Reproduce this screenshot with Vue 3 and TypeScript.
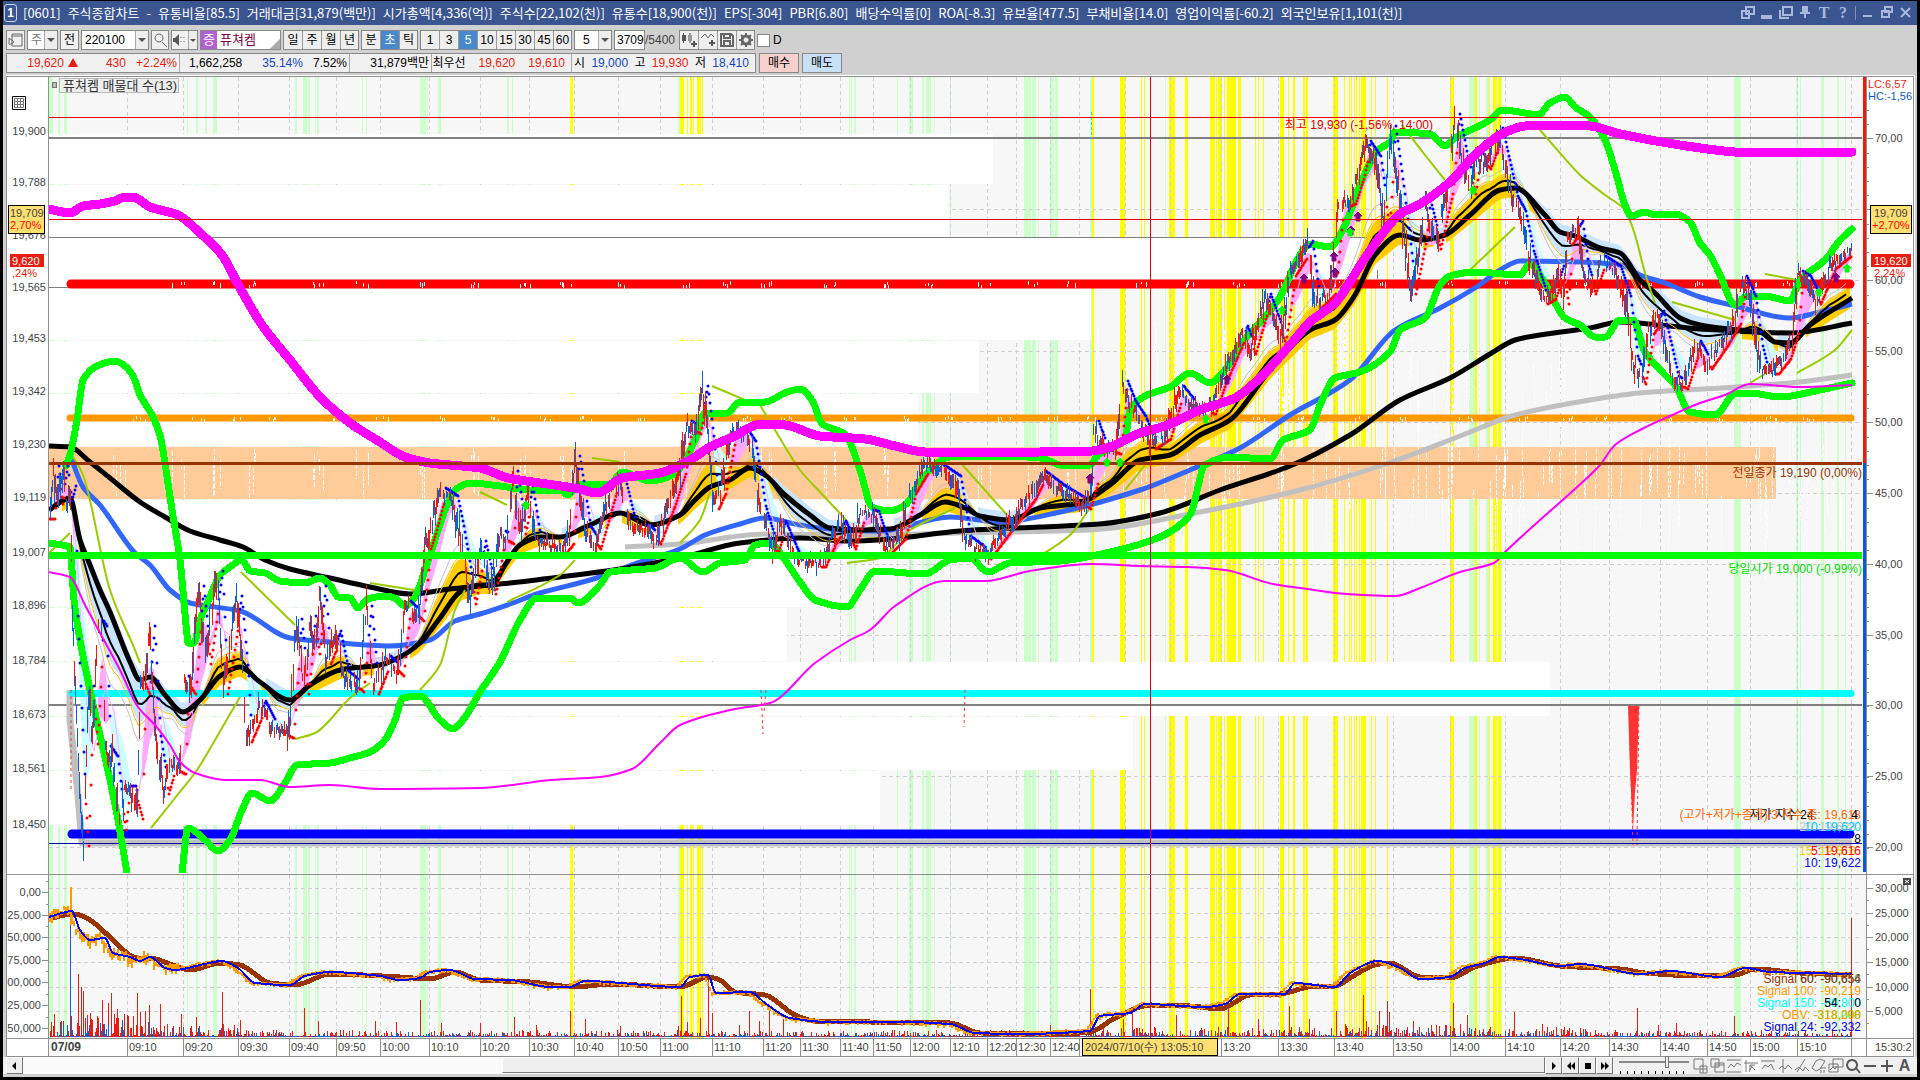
<script setup lang="ts">
import { ref } from 'vue'

type Pt = [number, number]

const titleWords = [
  '[0601]', '주식종합차트', '-', '유통비율[85.5]', '거래대금[31,879(백만)]', '시가총액[4,336(억)]',
  '주식수[22,102(천)]', '유통수[18,900(천)]', 'EPS[-304]', 'PBR[6.80]', '배당수익률[0]', 'ROA[-8.3]',
  '유보율[477.5]', '부채비율[14.0]', '영업이익률[-60.2]', '외국인보유[1,101(천)]',
]

const periods = ['일', '주', '월', '년']
const units = ['분', '초', '틱']
const steps = ['1', '3', '5', '10', '15', '30', '45', '60']
const unit = ref('초')
const step = ref('5')
const code = ref('220100')
const count = ref('3709')
const zoom = ref(70)

function parse(s: string): Pt[] {
  return s.trim().split(/\s+/).map((p) => p.split(',').map(Number) as Pt)
}
function line(points: Pt[]): string {
  return 'M' + points.map(([x, y]) => `${Math.round(x)} ${Math.round(y * 10) / 10}`).join('L')
}
// smooth curve through the points, with tangents limited so that peaks stay in place
function curve(points: Pt[]): string {
  const slope = (i: number): number => (points[i + 1][1] - points[i][1]) / (points[i + 1][0] - points[i][0])
  const tangent = (i: number): number => {
    if (i === 0) return slope(0)
    if (i === points.length - 1) return slope(i - 1)
    const a = slope(i - 1)
    const b = slope(i)
    return a * b <= 0 ? 0 : (2 * a * b) / (a + b)
  }
  let d = `M${points[0][0]} ${points[0][1]}`
  for (let i = 1; i < points.length; i++) {
    const [x0, y0] = points[i - 1]
    const [x1, y1] = points[i]
    const h = (x1 - x0) / 3
    d += `C${(x0 + h).toFixed(1)} ${(y0 + h * tangent(i - 1)).toFixed(1)} ${(x1 - h).toFixed(1)} ${(y1 - h * tangent(i)).toFixed(1)} ${x1} ${y1}`
  }
  return d
}
function path(s: string): string {
  return curve(parse(s))
}
function at(points: Pt[], x: number): number {
  if (x <= points[0][0]) return points[0][1]
  for (let i = 1; i < points.length; i++) {
    const a = points[i - 1]
    const b = points[i]
    if (x <= b[0]) return a[1] + ((b[1] - a[1]) * (x - a[0])) / (b[0] - a[0] || 1)
  }
  return points[points.length - 1][1]
}
let seed = 20240710
function rnd(): number {
  seed = (seed + 0x6d2b79f5) | 0
  let t = Math.imul(seed ^ (seed >>> 15), 1 | seed)
  t = (t + Math.imul(t ^ (t >>> 7), 61 | t)) ^ t
  return ((t ^ (t >>> 14)) >>> 0) / 4294967296
}

const LEFT = 49
const RIGHT = 1862

const ticks: [number, string][] = [
  [127, '09:10'], [183, '09:20'], [238, '09:30'], [289, '09:40'], [336, '09:50'], [380, '10:00'], [429, '10:10'],
  [480, '10:20'], [529, '10:30'], [574, '10:40'], [618, '10:50'], [660, '11:00'], [712, '11:10'], [763, '11:20'],
  [800, '11:30'], [840, '11:40'], [873, '11:50'], [910, '12:00'], [950, '12:10'], [987, '12:20'], [1016, '12:30'],
  [1050, '12:40'], [1079, ''], [1125, ''], [1170, ''], [1221, '13:20'], [1278, '13:30'], [1334, '13:40'],
  [1393, '13:50'], [1450, '14:00'], [1505, '14:10'], [1560, '14:20'], [1609, '14:30'], [1660, '14:40'],
  [1707, '14:50'], [1750, '15:00'], [1797, '15:10'], [1851, ''],
]
const axisTicks = ticks.filter(([x]) => x < 1080 || x > 1217)

const leftPrices: [number, string][] = [
  [131, '19,900'], [182, '19,788'], [235, '19,676'], [287, '19,565'], [338, '19,453'], [391, '19,342'], [444, '19,230'],
  [497, '19,119'], [552, '19,007'], [605, '18,896'], [660, '18,784'], [714, '18,673'], [768, '18,561'], [824, '18,450'],
]
const rightLevels: [number, string][] = [
  [138, '70,00'], [209, '65,00'], [280, '60,00'], [351, '55,00'], [422, '50,00'], [493, '45,00'],
  [564, '40,00'], [635, '35,00'], [705, '30,00'], [776, '25,00'], [847, '20,00'],
]
const minorTicks = Array.from({ length: 53 }, (_, i) => 110 + Math.round(i * 14.2))
const subLeft: [number, string][] = [
  [892, '0,00'], [915, '25,000'], [937, '50,000'], [960, '75,000'], [982, '00,000'], [1005, '25,000'], [1028, '50,000'],
]
const subRight: [number, string][] = [
  [888, '30,000'], [913, '25,000'], [937, '20,000'], [962, '15,000'], [987, '10,000'], [1011, '5,000'],
]

const greenBands = parse(`49,4 58,2 64,3 187,1 196,2 205,2 213,4 295,2 303,4 308,2 315,1 317,2 362,1 366,1 420,6 427,1 438,3 507,2 512,1
 678,2 849,1 851,1 854,2 897,1 909,4 922,2 926,5 934,1 950,1 1024,7 1032,4 1038,1 1050,4 1055,3 1090,2 1165,1
 1469,6 1479,1 1486,3 1501,1 1734,7 1796,2 1800,1 1821,3 1837,2 1845,1`)
const yellowBands = parse(`570,3 680,4 687,1 690,2 693,1 697,4 702,1 1092,2 1120,5 1141,1 1144,1 1169,6 1185,3 1210,5 1216,1 1218,4
 1224,1 1227,9 1238,3 1255,1 1258,1 1263,1 1280,4 1288,1 1293,2 1303,2 1306,2 1333,5 1344,1 1349,1 1351,1 1354,1 1356,1 1359,1
 1361,5 1371,1 1375,1 1387,1 1450,4 1475,2 1489,1 1493,4 1498,2 1500,1`)

// volume-by-price rows: top, bottom, right edge
const profile = [
  [134, 184, 993], [185, 237, 949], [238, 287, 1377], [288, 340, 1091], [341, 393, 979], [394, 446, 918],
  [500, 553, 1088], [554, 607, 816], [608, 661, 787], [662, 716, 1550], [717, 770, 1133], [771, 825, 880],
]

const magenta = path(`49,209 70,213 83,206 100,204 115,201 125,197 133,197 150,207 178,215 200,233 222,255 240,288 262,325 290,360 320,397
 350,423 380,442 405,457 430,463 480,468 508,478 540,483 580,489 597,493 622,478 660,473 690,460 710,447 735,436 760,424 785,425 820,436
 865,439 895,446 925,452 980,453 1040,452 1092,451 1110,447 1140,433 1165,426 1200,410 1235,398 1260,378 1290,345 1310,322 1335,303
 1365,258 1390,224 1400,214 1420,204 1450,182 1475,155 1500,135 1525,126 1560,125 1590,126 1620,134 1680,145 1735,152 1755,153 1800,152 1852,152`)
const upper = path(`66,466 70,455 77,420 83,380 97,366 115,361 125,366 133,376 140,395 152,415 160,435 166,470 172,510 180,560 187,635
 188,643 194,643 200,620 210,597 220,575 230,567 242,560 250,571 265,573 280,581 305,583 320,578 330,585 338,597 350,598 358,608
 368,599 385,596 395,598 405,606 415,597 425,570 435,540 445,510 455,490 470,483 500,486 530,490 560,490 568,495 580,484 610,484 622,472
 650,481 675,474 685,460 695,440 705,413 727,413 740,402 765,402 785,393 800,389 812,400 822,424 845,434 860,470 872,507 890,511 905,505
 925,475 950,457 1000,456 1040,458 1065,466 1090,465 1098,455 1125,440 1130,410 1145,396 1170,387 1190,373 1210,383 1225,370 1240,345
 1265,317 1280,297 1300,255 1310,244 1330,247 1345,225 1362,180 1378,150 1390,142 1395,132 1430,134 1445,146 1455,138 1490,120 1502,110
 1525,113 1538,115 1550,103 1565,97 1575,107 1590,117 1605,140 1615,170 1625,205 1631,216 1645,212 1655,215 1675,214 1690,222
 1700,243 1710,255 1720,275 1735,305 1745,297 1765,296 1790,301 1800,280 1825,260 1840,240 1852,229`)
const lowerA = path('49,543 70,547 74,600 80,640 90,690 100,735 110,780 118,820 127,873')
const lowerB = path(`182,873 188,828 205,840 218,851 230,840 242,810 252,793 270,801 285,783 297,765 330,763 350,758 370,752 385,740 395,720
 403,698 420,696 440,720 453,729 463,720 480,692 500,662 520,620 537,598 570,598 578,603 600,585 610,572 655,568 680,558 703,572 720,563
 745,560 755,545 770,543 785,560 800,582 815,600 847,607 860,590 875,571 925,574 950,560 970,558 988,572 1010,563 1060,561 1110,552
 1160,537 1190,515 1205,465 1230,457 1270,459 1283,440 1310,430 1320,405 1335,378 1360,372 1390,352 1400,330 1425,318 1440,285 1450,276
 1475,272 1520,275 1530,264 1543,280 1565,318 1580,325 1595,337 1605,337 1620,320 1633,320 1645,352 1665,375 1675,385 1690,412
 1715,415 1735,394 1750,393 1780,397 1820,390 1852,383`)
const slowBlack = path(`49,446 70,447 90,462 110,478 140,502 165,517 190,531 220,540 243,547 265,560 290,569 330,578 370,587 410,594
 450,589 480,586 510,583 560,577 620,569 680,558 740,543 800,538 850,541 890,539 960,531 1040,527 1100,524 1160,513 1220,490 1290,466
 1350,435 1400,400 1450,378 1490,354 1515,340 1540,335 1590,328 1620,322 1660,325 1700,329 1790,333 1852,323`)
const blueLine = path(`70,455 83,487 100,505 135,553 150,565 170,590 190,603 240,611 290,638 330,642 390,646 430,640 455,621 480,614 510,604
 540,593 590,580 640,562 680,549 705,535 740,524 765,518 800,525 840,530 880,531 950,517 1000,522 1060,512 1140,490 1190,470 1240,448
 1290,415 1350,380 1395,330 1440,308 1475,288 1500,270 1520,261 1580,262 1620,265 1640,275 1665,283 1700,297 1735,306 1790,318 1820,312 1852,304`)
const grayLine = path(`625,547 680,544 765,534 850,535 960,533 1088,530 1200,512 1300,490 1380,466 1450,440 1480,428 1515,415 1590,400 1640,393
 1720,388 1800,382 1852,375`)
const thinMagenta = path(`49,572 70,577 85,605 100,633 120,670 138,707 155,725 170,745 180,762 195,773 225,780 260,780 290,787 330,785
 380,789 480,788 551,780 600,777 632,769 660,743 680,725 735,709 770,703 815,663 850,640 870,630 895,606 945,581 985,581 1030,571 1092,564
 1140,566 1188,567 1225,570 1273,584 1300,588 1347,594 1396,596 1420,588 1460,572 1494,563 1505,552 1540,520 1575,489 1600,465 1615,445
 1640,430 1670,416 1700,403 1725,395 1750,384 1800,387 1852,385`)
const olive = [
  '49,553 70,533', '72,455 83,475 110,590 135,650 140,663', '151,828 175,798 197,770 215,740 240,697', '241,572 295,625',
  '295,739 315,733 350,698 370,683', '370,583 420,591', '420,690 440,665 455,610 465,590', '480,492 507,505',
  '507,602 560,575 575,560', '592,458 620,462', '680,543 700,520 710,492', '712,386 745,400', '760,405 775,430 800,470 820,492 848,522',
  '847,563 880,558 910,530 955,508', '960,462 1007,515', '1030,562 1070,535 1090,508', '1125,490 1145,465', '1402,125 1425,155 1445,180',
  '1470,270 1515,227', '1540,130 1560,153 1580,175 1605,195 1625,210 1635,235 1645,273 1655,303', '1672,302 1735,320',
  '1750,383 1765,374', '1765,274 1797,280', '1797,373 1835,350 1852,330',
].map(path).join('')

const ma = parse(`49,510 70,498 80,540 90,565 100,590 110,612 130,662 140,680 150,677 165,695 183,712 200,700 220,676 240,667 260,682 290,700
 310,685 340,670 380,665 400,657 420,643 440,618 460,592 480,585 492,585 505,565 520,545 540,537 560,537 590,525 620,513 650,525 680,515
 695,500 710,487 730,480 750,468 765,475 785,495 810,515 830,528 860,530 890,529 920,515 945,502 965,508 980,516 1010,520 1040,508
 1080,503 1110,485 1140,460 1170,455 1200,435 1230,420 1270,370 1310,330 1335,320 1355,295 1375,255 1400,235 1420,240 1445,235 1470,215
 1500,190 1515,188 1545,215 1560,232 1575,236 1600,248 1620,253 1640,280 1655,293 1680,318 1700,325 1720,328 1740,330 1760,332 1775,342
 1790,343 1810,325 1852,298`)
const price = parse(`49,515 53,470 57,500 62,470 66,505 70,490 72,620 75,690 80,800 83,842 88,690 92,740 98,625 101,630 105,750 112,760
 120,826 124,790 130,790 137,815 140,680 144,690 149,630 155,740 163,790 170,765 180,770 183,680 190,690 198,590 205,660 217,575 222,690
 230,640 236,600 243,680 246,738 260,705 270,725 288,734 296,623 303,690 310,620 314,650 320,590 325,660 335,635 343,675 358,688 366,610
 373,690 385,660 398,672 405,605 418,617 425,545 430,530 440,492 452,500 458,530 470,600 480,545 490,590 500,535 508,540 512,475 520,530
 527,490 535,540 560,550 568,540 574,460 585,530 595,545 605,510 612,485 620,484 630,525 645,530 655,540 670,500 680,470 686,425 695,430
 702,390 708,440 713,505 720,490 730,435 740,430 750,445 760,510 772,550 780,525 795,560 820,563 830,540 840,525 850,545 860,512 873,515
 885,550 900,535 910,490 925,465 940,470 955,480 965,540 985,555 1000,535 1015,515 1030,495 1040,475 1060,490 1085,505 1092,480 1093,425
 1100,445 1115,450 1122,385 1130,405 1140,420 1150,445 1165,435 1178,390 1190,405 1210,410 1220,380 1242,330 1250,350 1265,298 1280,340
 1290,272 1307,245 1315,305 1330,290 1338,205 1350,200 1358,175 1365,145 1375,160 1384,225 1390,130 1398,190 1410,290 1420,240 1425,205
 1435,245 1447,190 1454,118 1462,160 1470,190 1475,155 1485,165 1497,132 1503,160 1512,200 1520,215 1528,255 1542,300 1550,295 1558,270
 1563,300 1567,240 1577,225 1583,270 1590,290 1600,260 1615,270 1625,300 1632,360 1640,380 1648,330 1658,315 1665,345 1673,380 1682,385
 1690,360 1695,345 1706,365 1720,345 1735,320 1741,280 1750,300 1757,350 1762,370 1773,370 1785,355 1793,330 1797,275 1805,280 1815,300
 1830,265 1842,255 1851,250`)

function smooth(x: number, span: number): number {
  let sum = 0
  for (let i = 0; i < 8; i++) sum += at(price, x - (i * span) / 8)
  return sum / 8
}

let redCandles = ''
let blueCandles = ''
let redDots = ''
let blueDots = ''
for (let x = 50; x < 1852; x += 1) {
  const y = at(price, x)
  const range = 4 + rnd() * 10 + Math.min(14, Math.abs(at(price, x + 2) - y))
  const bar = `M${x}.5 ${Math.round(y - range * rnd())}v${Math.round(range)}`
  const pick = rnd()
  if (pick < 0.42) redCandles += bar
  else if (pick < 0.8) blueCandles += bar
  const lag = at(price, x - 6)
  if (y < lag - 3) redDots += `M${x} ${Math.round(lag + 4)}h0`
  else if (y > lag + 3) blueDots += `M${x} ${Math.round(lag - 4)}h0`
}

// ribbons between the average and the quicker averages, split by direction
let goldFill = ''
let skyFill = ''
let pinkFill = ''
let paleFill = ''
const thinBlack: Pt[] = []
const thinGold: Pt[] = []
const thinGray: Pt[] = []
const thinPink: Pt[] = []
function quad(x: number, a0: number, b0: number, a1: number, b1: number): string {
  return `M${x} ${a0.toFixed(1)}L${x + 4} ${a1.toFixed(1)}L${x + 4} ${b1.toFixed(1)}L${x} ${b0.toFixed(1)}Z`
}
function blend(x: number, k: number): number {
  const m = at(ma, x)
  return m + (smooth(x, 36) - m) * k
}
for (let x = 50; x < 1850; x += 4) {
  const up = smooth(x, 36) < at(ma, x)
  const pad = up ? 9 : -8
  const ribbon = quad(x, at(ma, x) + pad, blend(x, 0.42), at(ma, x + 4) + pad, blend(x + 4, 0.42))
  if (up) goldFill += ribbon
  else skyFill += ribbon
  const f0 = smooth(x, 10)
  const f1 = smooth(x + 4, 10)
  const fast = quad(x, f0, smooth(x, 30), f1, smooth(x + 4, 30))
  if (f0 < smooth(x, 30)) pinkFill += fast
  else paleFill += fast
  thinBlack.push([x, blend(x, 0.25)])
  thinGold.push([x, blend(x, 0.45)])
  thinGray.push([x, blend(x, 0.6)])
  thinPink.push([x, smooth(x, 20)])
}

let whiteNoise = ''
let specks = ''
for (let i = 0; i < 34; i++) {
  const base = Math.round(90 + i * 51 + rnd() * 30)
  for (let k = 0; k < 4; k++) {
    const x = base + Math.round(rnd() * 14)
    const y = 448 + Math.round(rnd() * 22)
    if (x < 1775) whiteNoise += `M${x}.5 ${y}V${Math.min(498, y + 10 + Math.round(rnd() * 36))}`
    if (x < 1845 && x > 135) specks += `M${x}.5 ${281 + Math.round(rnd() * 4)}v${2 + Math.round(rnd() * 3)}`
    if (x < 1845) specks += `M${x + 20}.5 ${416 + Math.round(rnd() * 3)}v3`
  }
}
for (let i = 0; i < 120; i++) {
  const x = Math.round(1090 + rnd() * 750)
  const y = 300 + Math.round(rnd() * 200)
  whiteNoise += `M${x}.5 ${y}l${Math.round(rnd() * 4 - 2)} ${30 + Math.round(rnd() * 90)}`
}

const obvSlow = path(`49,919 65,915 75,914 90,920 110,937 137,958 150,958 170,964 190,970 220,963 240,965 270,983 295,985 330,974 400,977
 430,979 455,972 480,980 530,982 575,987 610,984 680,987 708,977 720,980 735,992 765,995 795,1015 815,1021 870,1022 950,1023 980,1033
 1060,1034 1090,1032 1115,1018 1150,1005 1190,1006 1220,1009 1250,995 1280,994 1315,986 1335,986 1350,978 1375,965 1390,963 1420,977
 1450,978 1475,967 1505,959 1515,958 1560,966 1620,969 1645,973 1700,976 1735,975 1755,969 1800,973 1852,975`)
const obvFast = parse(`49,917 62,913 72,911 80,930 90,940 105,938 113,953 130,957 140,961 150,957 165,968 175,970 200,965 222,961 238,968
 255,983 290,985 305,976 330,972 380,976 400,980 420,978 430,972 450,970 475,979 510,980 550,987 570,987 585,981 680,987 690,977 708,975
 716,993 750,992 765,1003 790,1018 830,1022 900,1022 950,1024 975,1033 1020,1034 1090,1031 1100,1016 1130,1013 1145,1004 1205,1007
 1225,1004 1240,994 1285,994 1295,983 1335,987 1350,973 1378,961 1400,968 1420,979 1450,977 1465,968 1485,963 1500,957 1520,959 1560,966
 1580,964 1640,974 1670,971 1720,977 1745,968 1770,972 1852,974`)
const obvFastPath = curve(obvFast)
let obvRaw = 'M71 887V925'
for (let x = 50; x < 1852; x += 2) {
  const y = at(obvFast, x + 4)
  const swing = x < 180 ? 11 : 3
  obvRaw += `M${x} ${Math.round(y - 1 - rnd() * swing * 0.5)}v${Math.round(2 + rnd() * swing)}`
}

const spikes = parse(`78,63 81,50 83,46 90,24 102,37 108,34 111,44 117,28 137,44 140,25 149,32 160,33 181,23 196,20 222,45 240,17 304,29 318,16
 375,16 396,15 420,37 441,14 480,14 514,20 536,12 570,26 585,18 620,11 678,11 681,41 687,15 700,19 708,60 712,24 739,12 749,26 759,16 769,30
 783,18 1050,12 1090,48 1123,18 1132,25 1176,22 1228,30 1258,18 1289,31 1309,18 1336,26 1363,42 1366,16 1379,26 1387,36 1389,25 1413,16
 1453,34 1467,22 1514,25 1542,13 1637,29 1658,12 1676,14 1734,21 1851,119`)
let redVolume = ''
let blueVolume = 'M70.5 1037V912'
for (let x = 50; x < 1851; x += 1) {
  const busy = x < 150 ? 26 : x < 240 || (x > 1330 && x < 1480) ? 13 : x > 1100 && x < 1600 ? 10 : 7
  redVolume += `M${x}.5 1037v-${Math.max(1, Math.round(Math.pow(rnd(), 3) * busy))}`
  if (rnd() < 0.6) blueVolume += `M${x}.5 1037v-${Math.max(1, Math.round(Math.pow(rnd(), 4) * busy * 0.7))}`
}
for (const [x, h] of spikes) redVolume += `M${x}.5 1037v-${h}`

const purpleMarks = parse('1090,474 1227,375 1304,274 1334,252 1335,268 1351,226 1358,212 1836,273')
const greenMarks = parse('526,505 1107,462 1120,462 1206,419 1282,310 1350,232 1473,190 1819,292 1847,268')

const windowIcons = [
  'M5 1h8v7H5zM1 5h7v7H1z', 'M1 10h11M1 12h11', 'M4 1h9v8H4zM1 4v8h9', 'M4 1h6M5 1v6M9 1v6M7 1v6M2 7h10M7 7v5',
]
const frameIcons = ['M2 10h9', 'M5 1h7v5H5zM2 5h7v6H2z', 'M2 2l9 9M11 2l-9 9']
const toolIcons = [
  'M2 1h9v8M2 1v10h5M8 8h7v7H8zM11 8v7M8 11h7', 'M2 1h8v8H2zM6 5h9v9H6zM6 7h9', 'M1 2h14M1 14h14M2 10l3-4 3 3 3-4 4 2',
  'M3 2v12M1 5h14M6 14l3-6M7 7l5 5M7 7h5M7 7v5', 'M1 3h14M2 11l3-4 3 2 3-3 3 6', 'M6 1v14M2 11l3-3 3 3 3-4 4 4', 'M3 14L11 1M1 12l4-3 4 4 2-4 4 4',
  'M5 3l4-2 5 2-5 8-4 2-4-3zM9 10h6M10 12v3M13 12v3', 'M5 1h10v8H5zM1 6h9v8H1zM2 12l3-3 2 2 2-3', 'M7 2a5 5 0 1 0 .1 0zM11 10l4 5', 'M2 8h12', 'M2 8h12M8 2v12',
]
</script>

<template>
  <div class="window">
    <header class="title-bar">
      <span class="slot">1</span>
      <h1 class="title"><span v-for="w in titleWords" :key="w">{{ w }}</span></h1>
      <div class="title-icons">
        <button v-for="(d, i) in windowIcons" :key="i" type="button" aria-label="창 도구"><svg width="14" height="14"><path :d="d" /></svg></button>
        <button type="button" class="serif">T</button>
        <button type="button" class="serif">?</button>
        <i class="rule"></i>
        <button v-for="(d, i) in frameIcons" :key="'f' + i" type="button" aria-label="창"><svg width="14" height="14"><path :d="d" /></svg></button>
      </div>
    </header>

    <div class="toolbar">
      <button type="button" class="tool" aria-label="패널"><svg width="15" height="14"><path d="M4 1h10v12H4zM4 3h10M1 5v6M1 5l5 4-5 3" /></svg></button>
      <span class="combo kind"><select aria-label="종류"><option>주</option></select><i class="arrow"></i></span>
      <button type="button" class="tool">전</button>
      <span class="combo code"><input v-model="code" aria-label="종목코드" /><i class="arrow"></i></span>
      <button type="button" class="tool find" aria-label="검색"><svg width="15" height="15"><path d="M6 1a4 4 0 1 0 .1 0zM9 9l5 5" /></svg></button>
      <button type="button" class="tool sound" aria-label="소리"><svg width="14" height="14"><path class="solid" d="M1 5h2l4-4v12l-4-4H1z" /><path d="M9 4v1M9 8v1M12 4v1M12 8v1" /></svg><i class="arrow"></i></button>
      <span class="stock"><b>증</b>퓨쳐켐</span>
      <div class="group"><button v-for="p in periods" :key="p" type="button">{{ p }}</button></div>
      <div class="group"><button v-for="u in units" :key="u" type="button" :class="{ on: unit === u }" @click="unit = u">{{ u }}</button></div>
      <div class="group"><button v-for="s in steps" :key="s" type="button" :class="{ on: step === s }" @click="step = s">{{ s }}</button></div>
      <span class="combo interval"><select aria-label="간격"><option>5</option></select><i class="arrow"></i></span>
      <span class="count"><input v-model="count" aria-label="봉 개수" /><span>/5400</span></span>
      <div class="group icons">
        <button type="button" aria-label="캔들 추가"><svg width="16" height="16"><path class="solid" d="M1 3h4v6H1zM2 1h1v10H2z" /><path class="soft" d="M7 3h4v6H7zM8 1h2v10H8z" /><path class="solid" d="M12 9h2v2h2v2h-2v2h-2v-2h-2v-2h2z" /></svg></button>
        <button type="button" aria-label="지표 추가"><svg width="16" height="16"><path d="M1 6l4-4 3 4 3-4 3 3" /><path class="solid" d="M11 8h2v2h2v2h-2v2h-2v-2H9v-2h2z" /></svg></button>
        <button type="button" aria-label="저장"><svg width="16" height="16"><path class="disk" d="M2 2h10l2 2v10H2zM5 2v4h6V2M5 14V9h6v5" /></svg></button>
        <button type="button" aria-label="설정"><svg width="16" height="16"><path class="gear" d="M8 4a4 4 0 1 0 .1 0z" /><path class="teeth" d="M8 1v3M8 12v3M1 8h3M12 8h3M3 3l2 2M11 11l2 2M3 13l2-2M11 5l2-2" /></svg></button>
      </div>
      <label class="check"><input type="checkbox" />D</label>
    </div>

    <div class="quotes">
      <div class="quote-box">
        <div class="cell c1 up"><span>19,620<i class="rise"></i></span><span>430</span><span>+2.24%</span></div>
        <div class="cell c2"><span>1,662,258</span><span class="down">35.14%</span><span>7.52%</span></div>
        <div class="cell c3"><span>31,879백만</span></div>
        <div class="cell c4"><span>최우선</span><span class="up">19,620</span><span class="up">19,610</span></div>
        <div class="cell c5"><span>시</span><span class="down">19,000</span><span>고</span><span class="up">19,930</span><span>저</span><span class="down">18,410</span></div>
      </div>
      <button type="button" class="trade buy">매수</button>
      <button type="button" class="trade sell">매도</button>
    </div>

    <main class="chart">
      <svg viewBox="6 75 1909 982" role="img" aria-label="퓨쳐켐 5초 차트">
        <defs>
          <clipPath id="plot"><rect x="49" y="76" width="1815" height="797" /></clipPath>
        </defs>
        <rect x="6" y="75" width="1909" height="982" fill="#fff" />
        <rect x="49" y="77" width="1817" height="961" fill="#f7f7f7" />

        <g shape-rendering="crispEdges">
          <rect v-for="b in greenBands" :key="'g' + b[0]" :x="b[0]" y="77" :width="b[1]" height="961" fill="#ccffcc" />
          <rect v-for="b in yellowBands" :key="'y' + b[0]" :x="b[0]" y="77" :width="b[1]" height="961" fill="#ffff00" />
          <g stroke="#d0d0d0" stroke-dasharray="4 3">
            <line v-for="t in ticks" :key="t[0]" :x1="t[0] + 0.5" :x2="t[0] + 0.5" y1="77" y2="1038" />
            <line v-for="l in rightLevels" :key="l[0]" :x1="LEFT" :x2="RIGHT" :y1="l[0] + 0.5" :y2="l[0] + 0.5" />
            <line v-for="l in subRight" :key="l[0]" :x1="LEFT" :x2="RIGHT" :y1="l[0] + 0.5" :y2="l[0] + 0.5" />
          </g>
          <rect v-for="p in profile" :key="p[0]" :x="LEFT" :y="p[0]" :width="p[2] - LEFT" :height="p[1] - p[0]" fill="#fff" />
          <path d="M49 237.5H1371M49 287.5H70M1377.5 270V279" stroke="#808080" />
          <rect x="49" y="447" width="1727" height="52" fill="#ffcc99" />
          <path :d="whiteNoise" stroke="#fff" stroke-dasharray="5 2" fill="none" />
          <path d="M49 138H1862M49 705H1862" stroke="#808080" stroke-width="2" />
          <path d="M1091.5 112V138" stroke="#3cc" stroke-dasharray="3 2" />
        </g>

        <g clip-path="url(#plot)" fill="none" stroke-linejoin="round">
          <path :d="skyFill" fill="#c8e4ff" />
          <path :d="goldFill" fill="#ffcc00" />
          <path :d="paleFill" fill="#ccffff" />
          <path :d="pinkFill" fill="#ffaaff" />
          <path d="M70 690V720L77 785L82 843H1852" stroke="#c0c0c0" stroke-width="7" />
          <path d="M72 834H1850" stroke="#0000ff" stroke-width="9" stroke-linecap="round" />
          <path d="M49 843.5H1862" stroke="#0000aa" />
          <path d="M72 693.5H1851" stroke="#00ffff" stroke-width="7" stroke-linecap="round" />
          <path d="M71 284H1850" stroke="#ff0000" stroke-width="9" stroke-linecap="round" />
          <path d="M70 418H1851" stroke="#ff9900" stroke-width="7" stroke-linecap="round" />
          <path :d="specks" stroke="#fff" shape-rendering="crispEdges" />
          <path :d="grayLine" stroke="#c0c0c0" stroke-width="5" />
          <path :d="blueLine" stroke="#3366ff" stroke-width="5" />
          <path :d="slowBlack" stroke="#000" stroke-width="5" />
          <path :d="line(thinGray)" stroke="#c0c0c0" />
          <path :d="line(thinGold)" stroke="#ffbb00" />
          <path :d="line(thinBlack)" stroke="#000" stroke-width="2" />
          <path :d="line(thinPink)" stroke="#ffaaff" />
          <path :d="curve(ma)" stroke="#000" stroke-width="5" />
          <path :d="olive" stroke="#99cc00" stroke-width="2" />
          <g shape-rendering="crispEdges">
            <path :d="upper" stroke="#00ff00" stroke-width="7" stroke-linecap="round" />
            <path :d="lowerA" stroke="#00ff00" stroke-width="7" />
            <path :d="lowerB" stroke="#00ff00" stroke-width="7" stroke-linecap="round" />
          </g>
          <path :d="redDots" stroke="#ff0000" stroke-width="3" stroke-linecap="round" />
          <path :d="blueDots" stroke="#0000ff" stroke-width="3" stroke-linecap="round" />
          <path :d="blueCandles" stroke="#1060d0" shape-rendering="crispEdges" />
          <path :d="redCandles" stroke="#e81c10" shape-rendering="crispEdges" />
          <path :d="magenta" stroke="#ff00ff" stroke-width="9" stroke-linecap="round" shape-rendering="crispEdges" />
          <path :d="thinMagenta" stroke="#ff00ff" stroke-width="2" />
          <path d="M49 463.500H1862" stroke="#993300" stroke-width="3" />
          <path d="M49 555.500H1862" stroke="#00ff00" stroke-width="7" />
          <path d="M1628 706H1639L1637 770L1635 792L1633 830L1631 792L1630 770Z" fill="#ff3333" />
          <path d="M1629 706L1633 845M1639 706L1637 845M761 690L763 734M766 690L764 712M965 690L964 727M71 690V792" stroke="#ff3333" stroke-dasharray="3 3" />
          <path v-for="m in purpleMarks" :key="'p' + m[0] + m[1]" :d="`M${m[0]} ${m[1]}l4 4h-2v5h-4v-5h-2z`" fill="#800080" stroke="#800080" />
          <path v-for="m in greenMarks" :key="'m' + m[0]" :d="`M${m[0]} ${m[1] - 4}l4 4h-2v4h-4v-4h-2z`" fill="#00ff00" stroke="#00ff00" />
        </g>

        <g class="right" font-size="12">
          <text x="1433" y="129" fill="#e00000">최고 19,930 (-1,56%, 14:00)</text>
          <text x="1862" y="477" fill="#993300">전일종가 19,190 (0,00%)</text>
          <text x="1862" y="573" fill="#00dd00">당일시가 19,000 (-0,99%)</text>
          <text x="1817" y="819" fill="#000">저가 지수 24:</text>
          <text x="1861" y="819" fill="#ff6600">(고가+저가+종가)/3 지수 종: 19,618</text>
          <text x="1858" y="819" fill="#000">4</text>
          <text x="1856" y="831" fill="#c0c0c0">20: 19,628</text>
          <text x="1861" y="831" fill="#00ccff">10: 19,620</text>
          <text x="1861" y="843" fill="#000">8</text>
          <text x="1856" y="855" fill="#ffcc00">15: 19,616</text>
          <text x="1861" y="855" fill="#ff0000">5: 19,616</text>
          <text x="1861" y="867" fill="#0000ff">10: 19,622</text>
        </g>

        <g fill="none" shape-rendering="crispEdges">
          <path :d="redVolume" stroke="#e81c10" />
          <path :d="blueVolume" stroke="#1060d0" />
          <path :d="obvSlow" stroke="#993300" stroke-width="5" />
          <path :d="obvRaw" stroke="#ff9900" stroke-width="2" />
          <path :d="obvFastPath" stroke="#0000ff" stroke-width="2" />
          <path d="M49 117.500H1862M49 219.500H1862M1150.500 77V1038" stroke="#e00000" />
          <path d="M1864 77V463" stroke="#e81c10" stroke-width="3" />
          <path d="M1864 463V872" stroke="#1058d0" stroke-width="3" />
          <path d="M6 76.500H1914M6 874.500H1914M6 1038.500H1914M6 1056.500H1914M6.500 76V1057M48.500 76V1057M1866.500 76V1057M1913.500 76V1057" stroke="#909090" />
          <path v-for="t in axisTicks" :key="t[0]" :d="`M${t[0]}.5 1038V1056`" stroke="#909090" />
          <path v-for="l in rightLevels" :key="'r' + l[0]" :d="`M1867 ${l[0]}.5h6`" stroke="#909090" />
          <path v-for="m in minorTicks" :key="'k' + m" :d="`M1867 ${m}.5h2`" stroke="#909090" />
          <path v-for="l in subRight" :key="'s' + l[0]" :d="`M1867 ${l[0]}.5h6M1867 ${l[0] + 12}.5h2`" stroke="#909090" />
          <path v-for="l in subLeft" :key="'u' + l[0]" :d="`M42 ${l[0]}.5h6M46 ${l[0] - 11}.5h2`" stroke="#909090" />
        </g>

        <g class="right" font-size="12">
          <text x="1861" y="983" fill="#339999">60: -90,656</text>
          <text x="1861" y="983" fill="#993300">Signal 60: -90,654</text>
          <text x="1861" y="995" fill="#ff9900">Signal 100: -90,219</text>
          <text x="1861" y="1007" fill="#00ffff">Signal 150: -89,800</text>
          <text x="1841" y="1007" fill="#000">54:</text>
          <text x="1861" y="1007" fill="#000">0</text>
          <text x="1861" y="1019" fill="#00ff00">-318,000</text>
          <text x="1861" y="1019" fill="#ff9900">OBV: -318,298</text>
          <text x="1861" y="1031" fill="#0000dd">Signal 24: -92,332</text>
        </g>

        <g class="right" font-size="11" fill="#444">
          <text v-for="l in leftPrices" :key="l[0]" x="46" :y="l[0] + 4">{{ l[1] }}</text>
          <text v-for="l in subLeft" :key="l[0]" x="41" :y="l[0] + 4">{{ l[1] }}</text>
        </g>
        <g font-size="11" fill="#444">
          <text v-for="l in rightLevels" :key="l[0]" x="1875" :y="l[0] + 4">{{ l[1] }}</text>
          <text v-for="l in subRight" :key="l[0]" x="1875" :y="l[0] + 4">{{ l[1] }}</text>
          <text x="1868" y="88" fill="#e81c10">LC:6,57</text>
          <text x="1868" y="100" fill="#1058d0">HC:-1,56</text>
          <text x="1875" y="1051">15:30:2</text>
          <text x="51" y="1051" font-size="12" font-weight="bold">07/09</text>
          <text v-for="t in axisTicks" :key="t[0]" :x="t[0] + 2" y="1051">{{ t[1] }}</text>
          <rect x="8.500" y="205.500" width="36" height="28" fill="#ffe070" stroke="#000" />
          <rect x="1870.500" y="205.500" width="41" height="28" fill="#ffe070" stroke="#000" />
          <text x="10" y="217">19,709</text><text x="10" y="229" fill="#f00">2,70%</text>
          <text x="1874" y="217">19,709</text><text x="1872" y="229" fill="#f00">+2,70%</text>
          <rect x="10" y="254" width="34" height="13" fill="#e81c10" /><text x="12" y="265" fill="#fff">9,620</text><text x="12" y="277" fill="#e81c10">,24%</text>
          <rect x="1871" y="254" width="40" height="13" fill="#e81c10" /><text x="1874" y="265" fill="#fff">19,620</text><text x="1874" y="277" fill="#e81c10">2,24%</text>
          <rect x="1082.500" y="1038.500" width="135" height="17" fill="#ffe070" stroke="#000" /><text x="1085" y="1051">2024/07/10(수) 13:05:10</text>
          <rect x="59.500" y="78.500" width="119" height="14" fill="#eee" stroke="#bbb" /><text x="63" y="90" font-size="13" fill="#333">퓨쳐켐 매물대 수(13)</text>
          <rect x="52.500" y="82.500" width="4" height="5" fill="#bbb" stroke="#777" />
        </g>
        <path d="M12.500 96.500h13v13h-13z" fill="#fff" stroke="#000" />
        <path d="M14.500 98.500h9v9h-9zM14 101.500h10M14 104.500h10M17.500 98v10M20.500 98v10" fill="none" stroke="#777" />
        <rect x="1903" y="878" width="8" height="7" fill="#444" /><path d="M1905 880l4 3M1909 880l-4 3" stroke="#fff" />
      </svg>
    </main>

    <footer class="bottom">
      <button type="button" class="nav" aria-label="왼쪽"><svg width="16" height="16"><path class="ink" d="M9 4v8L5 8z" /></svg></button>
      <div class="track"><div class="thumb"></div></div>
      <button type="button" class="nav" aria-label="재생"><svg width="16" height="16"><path class="ink" d="M6 4v8l4-4z" /></svg></button>
      <button type="button" class="nav" aria-label="뒤로"><svg width="16" height="16"><path class="ink" d="M8 4v8L4 8zM12 4v8L8 8z" /></svg></button>
      <button type="button" class="nav" aria-label="정지"><svg width="16" height="16"><path class="ink" d="M5 5h6v6H5z" /></svg></button>
      <button type="button" class="nav" aria-label="앞으로"><svg width="16" height="16"><path class="ink" d="M4 4v8l4-4zM8 4v8l4-4z" /></svg></button>
      <div class="speed"><input v-model="zoom" type="range" aria-label="속도" /></div>
      <button v-for="(d, i) in toolIcons" :key="i" type="button" class="glyph" :class="{ on: i === 3, dark: i > 8 }" aria-label="차트 도구"><svg width="16" height="16"><path :d="d" /></svg></button>
      <button type="button" class="glyph letter">A</button>
    </footer>
  </div>
</template>

<style>
body { background: #000; }
</style>

<style scoped>
.window {
  box-sizing: border-box;
  margin: 0 3px 3px 3px;
  padding-bottom: 3px;
  background: #d0d0d0;
  font: 12px/16px "Liberation Sans", "Noto Sans CJK KR", sans-serif;
  color: #000;
  border-top: 1px solid #000;
}
button, input, select { font: inherit; color: inherit; margin: 0; padding: 0; border: 0; border-radius: 0; background: none; }
svg { display: block; }
.title-bar { display: flex; align-items: center; height: 24px; background: #3a5590; color: #fff; padding-right: 4px; }
.slot { width: 11px; height: 16px; margin-left: 1px; border: 1px solid #c8d4f0; border-radius: 3px; text-align: center; font-weight: bold; }
.title { display: flex; gap: 7px; margin: 0 0 0 6px; font: 13px/16px "Noto Sans CJK KR", sans-serif; white-space: nowrap; }
.title-icons { display: flex; align-items: center; gap: 5px; margin-left: auto; color: #a9b8dc; }
.title-icons button { width: 14px; height: 16px; }
.title-icons path { fill: none; stroke: #a9b8dc; stroke-width: 2; }
.title-icons .serif { font: bold 16px/16px "Liberation Serif", serif; }
.rule { width: 1px; height: 14px; background: #7e90be; }

.toolbar { display: flex; align-items: center; gap: 2px; padding: 5px 0 0 3px; white-space: nowrap; }
.tool { display: flex; align-items: center; justify-content: center; box-sizing: border-box; width: 19px; height: 20px; background: #f0f0f0; border: 1px solid #888; }
.tool path, .group path { fill: none; stroke: #666; }
.find { width: 18px; }
.sound { width: 27px; justify-content: space-between; }
.combo { display: flex; box-sizing: border-box; height: 20px; background: #fff; border: 1px solid #888; }
.combo input, .combo select { flex: 1; min-width: 0; padding-left: 3px; appearance: none; }
.kind { width: 31px; }
.kind select { color: #777; }
.code { width: 68px; }
.interval { width: 38px; }
.interval select { padding-left: 8px; }
.arrow { display: flex; align-items: center; justify-content: center; width: 12px; background: #eee; border-left: 1px solid #aaa; align-self: stretch; }
.arrow::before { content: ""; border: 4px solid transparent; border-top-color: #555; border-bottom: 0; }
.sound .arrow { width: 8px; }
.sound .arrow::before { border-width: 3px 3px 0; }
.stock { box-sizing: border-box; width: 81px; height: 20px; border: 1px solid #888; background: linear-gradient(135deg, #fff 89%, #aaa 90%); color: #800040; line-height: 18px; font-size: 13px; }
.stock b { display: inline-block; width: 16px; margin-right: 3px; background: #b060d0; color: #fff; font-weight: normal; text-align: center; line-height: 18px; }
.group { display: flex; height: 20px; box-sizing: border-box; border: 1px solid #888; background: #eee; }
.group button { box-sizing: border-box; width: 19px; display: flex; align-items: center; justify-content: center; border-right: 1px solid #999; }
.group button:last-child { border-right: 0; width: 17px; }
.group .on { background: #4a88cc; color: #fff; }
.toolbar .solid { fill: #555; stroke: none; }
.group .soft { fill: #999; stroke: none; }
.group .gear { stroke-width: 3; }
.group .teeth { stroke-width: 2; }
.group .disk { stroke-width: 2; }
.count { display: flex; align-items: center; color: #444; }
.count input { box-sizing: border-box; width: 31px; height: 20px; border: 1px solid #888; background: #fff; padding-left: 2px; color: #000; }
.icons { margin-left: 2px; }
.check { display: flex; align-items: center; gap: 3px; }
.check input { appearance: none; width: 13px; height: 13px; background: #fff; border: 1px solid #888; }

.quotes { display: flex; align-items: center; gap: 3px; padding: 3px 0 2px 3px; white-space: nowrap; }
.quote-box { display: flex; box-sizing: border-box; width: 750px; height: 20px; background: #f0f0f0; border: 1px solid #888; line-height: 18px; }
.cell { box-sizing: border-box; display: flex; justify-content: flex-end; border-right: 1px solid #aaa; padding-right: 2px; }
.c1 { width: 173px; gap: 10px; }
.c1 span:first-child { margin-right: 18px; }
.c2 { width: 170px; gap: 10px; }
.c2 span:first-child { margin-right: 10px; }
.c3 { width: 82px; }
.c4 { width: 140px; gap: 13px; padding-right: 6px; }
.c5 { flex: 1; justify-content: space-between; padding: 0 6px 0 2px; border: 0; }
.up { color: #e81c10; }
.down { color: #1048c0; }
.rise { display: inline-block; margin-left: 4px; border: 5px solid transparent; border-bottom: 9px solid #e81c10; border-top: 0; }
.trade { box-sizing: border-box; width: 40px; height: 20px; border: 1px solid #888; }
.buy { background: #f5d0cc; }
.sell { background: #c8dff5; }

.chart { margin: 0 2px 0 3px; }
.chart svg { width: 100%; height: auto; }
.right { text-anchor: end; }

.bottom { display: flex; align-items: center; height: 17px; padding: 0 4px 0 3px; background: #f0f0f0; }
.nav { box-sizing: border-box; width: 17px; height: 17px; background: #eee; border: 1px solid #fff; border-right-color: #777; border-bottom-color: #777; }
.ink { fill: #000; }
.track { flex: 1; height: 17px; background: #fafafa; }
.thumb { box-sizing: border-box; width: 68.5%; margin-left: auto; height: 16px; background: #efefef; border: 1px solid #fff; border-bottom: 1px solid #777; border-right-color: #777; }
.speed { display: flex; align-items: flex-start; width: 70px; height: 17px; margin: 0 3px 0 6px; background: repeating-linear-gradient(90deg, #000 0 1px, transparent 1px 7px) 1px 100% / 100% 3px no-repeat; }
.speed input { appearance: none; width: 70px; height: 2px; margin-top: 4px; background: #888; }
.speed input::-webkit-slider-thumb { appearance: none; width: 4px; height: 12px; background: #eee; border: 1px solid #777; }
.glyph { width: 17px; height: 17px; }
.glyph path { fill: none; stroke: #777; }
.glyph.dark path { stroke: #555; stroke-width: 2; }
.glyph.on { background: #fff; }
.letter { font: bold 16px/16px "Liberation Sans", sans-serif; color: #555; }
</style>
